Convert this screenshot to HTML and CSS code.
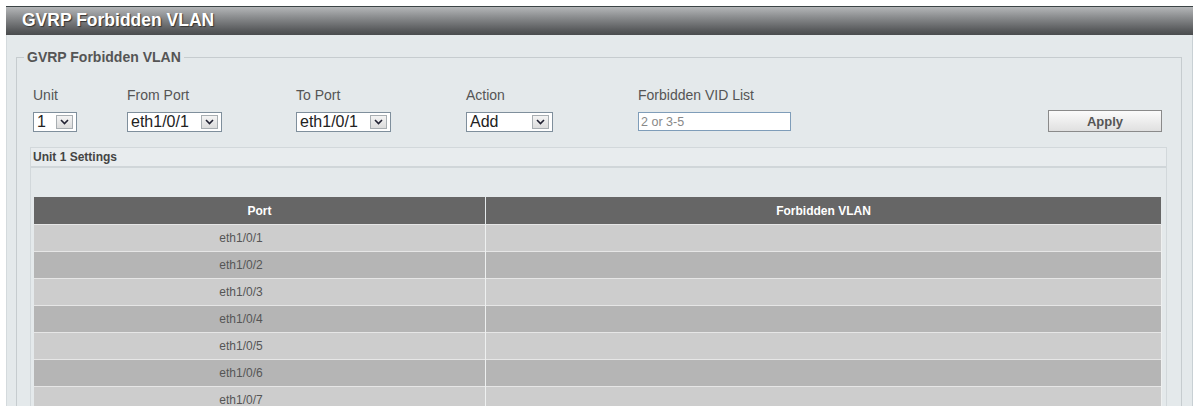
FILE: index.html
```html
<!DOCTYPE html>
<html lang="en">
<head>
    <meta charset="UTF-8">
    <title>GVRP Forbidden VLAN</title>
    <link rel="stylesheet" href="styles.css">
</head>
<body>
<div class="page">

    <!-- Title bar -->
    <div class="title-bar">GVRP Forbidden VLAN</div>

    <div class="content">
        <fieldset class="box">
            <legend>GVRP Forbidden VLAN</legend>

            <!-- Filter row -->
            <div class="form-row">
                <div class="field field-unit">
                    <label>Unit</label>
                    <div class="select sel-unit"><span class="val">1</span><span class="arrow"><svg width="9" height="6" viewBox="0 0 9 6"><path d="M1 1 L4.5 4.5 L8 1" fill="none" stroke="#223" stroke-width="1.6"/></svg></span></div>
                </div>
                <div class="field field-from">
                    <label>From Port</label>
                    <div class="select sel-port"><span class="val">eth1/0/1</span><span class="arrow"><svg width="9" height="6" viewBox="0 0 9 6"><path d="M1 1 L4.5 4.5 L8 1" fill="none" stroke="#223" stroke-width="1.6"/></svg></span></div>
                </div>
                <div class="field field-to">
                    <label>To Port</label>
                    <div class="select sel-port"><span class="val">eth1/0/1</span><span class="arrow"><svg width="9" height="6" viewBox="0 0 9 6"><path d="M1 1 L4.5 4.5 L8 1" fill="none" stroke="#223" stroke-width="1.6"/></svg></span></div>
                </div>
                <div class="field field-action">
                    <label>Action</label>
                    <div class="select sel-action"><span class="val">Add</span><span class="arrow"><svg width="9" height="6" viewBox="0 0 9 6"><path d="M1 1 L4.5 4.5 L8 1" fill="none" stroke="#223" stroke-width="1.6"/></svg></span></div>
                </div>
                <div class="field field-vid">
                    <label>Forbidden VID List</label>
                    <input type="text" class="vid-input" placeholder="2 or 3-5">
                </div>
                <button class="apply-btn">Apply</button>
            </div>

            <!-- Unit settings -->
            <div class="unit-box">
                <div class="unit-title">Unit 1 Settings</div>
                <table class="port-table">
                    <thead>
                        <tr><th class="col-port">Port</th><th>Forbidden VLAN</th></tr>
                    </thead>
                    <tbody>
                        <tr><td>eth1/0/1</td><td></td></tr>
                        <tr><td>eth1/0/2</td><td></td></tr>
                        <tr><td>eth1/0/3</td><td></td></tr>
                        <tr><td>eth1/0/4</td><td></td></tr>
                        <tr><td>eth1/0/5</td><td></td></tr>
                        <tr><td>eth1/0/6</td><td></td></tr>
                        <tr><td>eth1/0/7</td><td></td></tr>
                    </tbody>
                </table>
            </div>
        </fieldset>
    </div>
</div>
</body>
</html>
```

FILE: styles.css
```css
/* Basic styling */
body {
    margin: 0;
    padding: 0;
    background-color: white;
    font-family: "Liberation Sans", Arial, sans-serif;
    font-size: 12px;
    color: #444;
    height: 406px;
    overflow: hidden;
}

.page {
    padding: 6px 2px 0 6px;
    height: 400px;
    display: flex;
    flex-direction: column;
}

/* Title bar */
.title-bar {
    height: 28px;
    border-top: 1px solid #3c4446;
    background: linear-gradient(#b4b6b8, #8c8e90 35%, #56585a 85%, #4a4c4e);
    color: white;
    font-size: 17.5px;
    font-weight: bold;
    line-height: 27px;
    padding-left: 16px;
    text-shadow: 1px 1px 1px #333;
}

/* Content panel */
.content {
    flex: 1;
    background-color: #e4e9eb;
    border-left: 1px solid #d4dadd;
    border-right: 1px solid #c8d0d4;
    padding: 15px 10px 0 9px;
    overflow: hidden;
}

.box {
    margin: 0;
    padding: 0 14px 0 16px;
    border: 1px solid #c6cccf;
    border-bottom: none;
    min-width: 0;
    height: 400px;
}

.box legend {
    margin-left: -9px;
    padding: 0 3px;
    font-size: 14px;
    font-weight: bold;
    color: #555;
    line-height: 14px;
}

/* Form row */
.form-row {
    display: flex;
    align-items: flex-end;
    padding-top: 24px;
    padding-right: 5px;
}

.field {
    display: flex;
    flex-direction: column;
}

.field label {
    font-size: 14px;
    line-height: 15px;
    margin-bottom: 9px;
    color: #555;
}

.field-unit { width: 94px; }
.field-from { width: 169px; }
.field-to { width: 170px; }
.field-action { width: 172px; }
.field-vid { width: 213px; }

.select {
    box-sizing: border-box;
    height: 20px;
    display: flex;
    align-items: center;
    justify-content: space-between;
    background-color: white;
    border: 1px solid #7f8f9c;
    padding: 0 3px 0 3px;
    font-size: 16px;
    color: #222;
}

.sel-unit { width: 44px; }
.sel-port { width: 95px; }
.sel-action { width: 87px; }

.arrow {
    box-sizing: border-box;
    width: 17px;
    height: 14px;
    background: linear-gradient(#f4f4f4, #dcdcdc);
    border: 1px solid #a8aeb2;
    display: flex;
    align-items: center;
    justify-content: center;
}

.vid-input {
    box-sizing: border-box;
    width: 153px;
    height: 19px;
    margin: 0 0 1px 0;
    border: 1px solid #7f9db9;
    padding: 0 2px;
    font-family: inherit;
    font-size: 12.5px;
}

.vid-input::placeholder {
    color: #888;
}

/* Apply button */
.apply-btn {
    margin-left: auto;
    width: 114px;
    height: 22px;
    border: 1px solid #8a8a8a;
    background: linear-gradient(#fbfbfb, #e0e0e0);
    font-family: inherit;
    font-size: 13px;
    font-weight: bold;
    color: #555;
    cursor: pointer;
}

/* Unit settings */
.unit-box {
    margin: 15px 0 0 -3px;
    border: 1px solid #d2d8db;
    border-bottom: none;
    padding: 0 4px 0 3px;
    height: 300px;
}

.unit-title {
    margin: 0 -4px 0 -3px;
    padding-left: 2px;
    height: 18px;
    line-height: 18px;
    font-weight: bold;
    color: #444;
    border-bottom: 2px solid #d0d6d9;
    background-color: #e8ecee;
}

/* Port table */
.port-table {
    width: 100%;
    margin-top: 29px;
    border-collapse: collapse;
}

.port-table th {
    background-color: #666;
    color: white;
    font-weight: bold;
    height: 27px;
    padding: 0;
    text-align: center;
    border-right: 1px solid #e4e9eb;
}

.port-table th.col-port {
    width: 451px;
}

.port-table td {
    height: 26px;
    padding: 0;
    text-align: center;
    color: #555;
    border-top: 1px solid #e6e6e6;
    border-right: 1px solid #eef0f0;
}

.port-table td:first-child {
    padding-right: 37px;
}

.port-table tbody tr:nth-child(odd) td {
    background-color: #cdcdcd;
}

.port-table tbody tr:nth-child(even) td {
    background-color: #b5b5b5;
}
```
